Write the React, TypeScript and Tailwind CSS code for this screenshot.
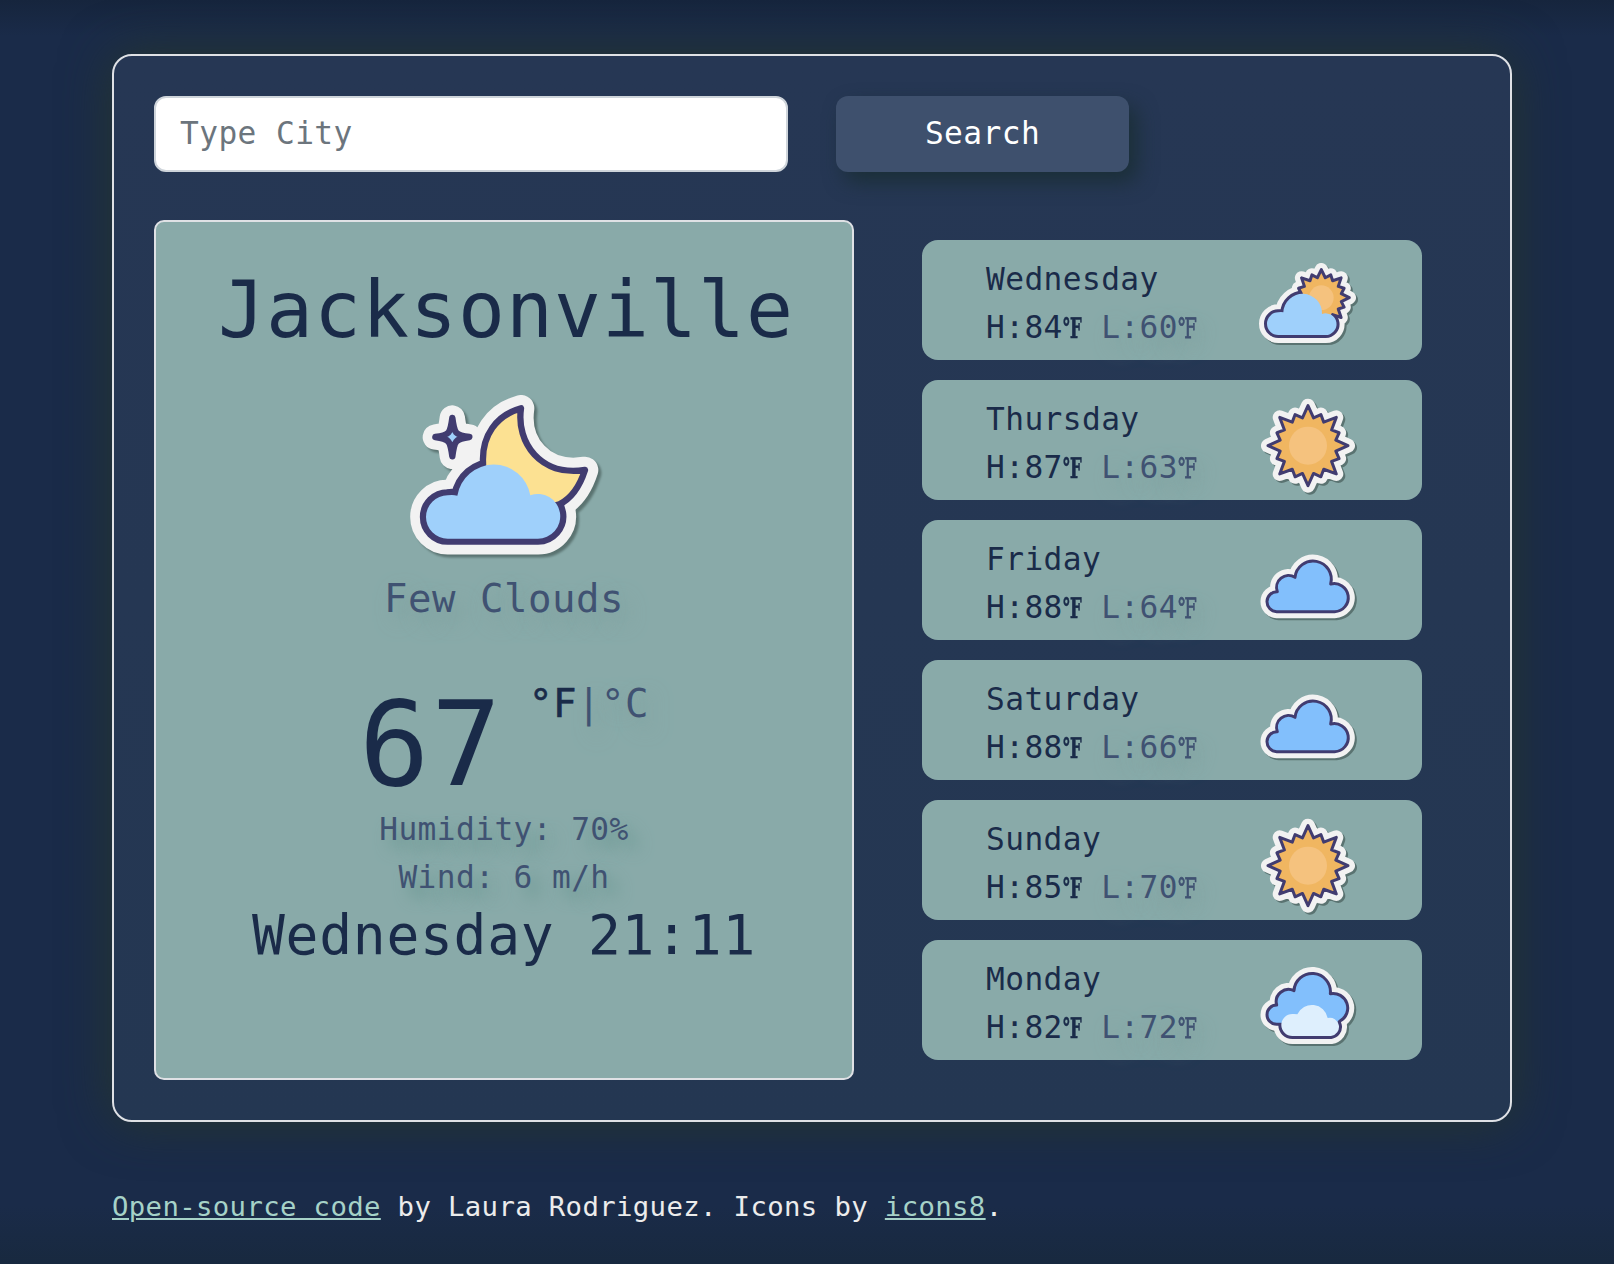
import type { ReactNode } from "react";

const NAVY = "#413c70";
const HALO = "#f2f2f2";

function sunPoints(cx: number, cy: number, long: number, short: number, valley: number) {
  return Array.from({ length: 32 }, (_, k) => {
    const r = k % 4 === 0 ? long : k % 2 === 0 ? short : valley;
    const a = (k * Math.PI) / 16;
    return `${(cx + r * Math.sin(a)).toFixed(1)},${(cy - r * Math.cos(a)).toFixed(1)}`;
  }).join(" ");
}

function Sticker({ viewBox, className, children }: { viewBox: string; className: string; children: ReactNode }) {
  return (
    <svg viewBox={viewBox} className={className} strokeLinejoin="round" strokeLinecap="round">
      {children}
    </svg>
  );
}

const SMALL = "size-[100px] shrink-0 overflow-visible drop-shadow-[2px_2px_0.5px_#5a7371]";

function NightCloudIcon() {
  const moon = "M363 82 C348 185 422 288 555 267 C538 320 515 352 478 370 L300 420 L250 300 L249 243 C246 165 288 103 363 82Z";
  const star = "M157 111 C163 157 165 162 208 168 C165 174 163 180 157 226 C151 180 149 174 106 168 C149 162 151 157 157 111Z";
  const cloud = "M143 473 A65 65 0 0 1 143 343 Q158 340 172 344 A111 111 0 0 1 391 343 A67 67 0 1 1 412 473Z";
  return (
    <Sticker viewBox="12 -12 600 600" className="mt-[19px] size-[200px] overflow-visible drop-shadow-[3px_3px_1px_#5a7371]">
      <path d={moon} fill={HALO} stroke={HALO} strokeWidth="80" />
      <path d={star} fill={HALO} stroke={HALO} strokeWidth="76" />
      <path d="M170 180 L250 140 V260 L183 262Z" fill={HALO} />
      <path d={cloud} fill={HALO} stroke={HALO} strokeWidth="95" />
      <path d={cloud} fill={NAVY} stroke={NAVY} strokeWidth="37" />
      <path d={moon} fill="#fce192" stroke={NAVY} strokeWidth="19" />
      <path d={star} fill="#9fd0fb" stroke={NAVY} strokeWidth="19" />
      <path d={cloud} fill="#9fd0fb" />
    </Sticker>
  );
}

function PartlySunnyIcon() {
  const rays = sunPoints(214, 143, 84, 74, 61);
  const cloud = "M85 255 A34 34 0 0 1 85 187 Q93 185 100 187 A58 58 0 0 1 216 192 A32.5 32.5 0 1 1 226 255Z";
  return (
    <Sticker viewBox="24 15 300 300" className={SMALL}>
      <polygon points={rays} fill={HALO} stroke={HALO} strokeWidth="40" />
      <path d={cloud} fill={HALO} stroke={HALO} strokeWidth="48" />
      <path d={cloud} fill={NAVY} stroke={NAVY} strokeWidth="18" />
      <polygon points={rays} fill="#f0b661" stroke={NAVY} strokeWidth="9" />
      <circle cx="214" cy="143" r="37" fill="#f5c27e" />
      <path d={cloud} fill="#9fd0fb" />
    </Sticker>
  );
}

function SunIcon() {
  const rays = sunPoints(174, 587, 120, 101, 85);
  return (
    <Sticker viewBox="24 435 300 300" className={SMALL}>
      <polygon points={rays} fill={HALO} stroke={HALO} strokeWidth="42" />
      <polygon points={rays} fill="#f0b661" stroke={NAVY} strokeWidth="9" />
      <circle cx="174" cy="587" r="57" fill="#f5c27e" />
    </Sticker>
  );
}

function CloudIcon() {
  const cloud = "M80 245 A30 30 0 0 1 82 185 A36 36 0 0 1 135 142 A54.6 54.6 0 1 1 242 162 A42.2 42.2 0 1 1 254 245Z";
  return (
    <Sticker viewBox="24 15 300 300" className={SMALL}>
      <path d={cloud} fill={HALO} stroke={HALO} strokeWidth="39" />
      <path d={cloud} fill="#82bffc" stroke={NAVY} strokeWidth="9" />
    </Sticker>
  );
}

function CloudsIcon() {
  const back = "M95 223 H80 A29 29 0 0 1 80 165 A37 37 0 0 1 132 122 A54.7 54.7 0 1 1 241 131 A44 44 0 0 1 270 213 L250 240 H105Z";
  const front = "M127 258 A33 33 0 0 1 127 192 Q134 191 142 193 A48 48 0 0 1 233 204 A27.5 27.5 0 1 1 243 258Z";
  return (
    <Sticker viewBox="24 15 300 300" className={SMALL}>
      <path d={back} fill={HALO} stroke={HALO} strokeWidth="39" />
      <path d={front} fill={HALO} stroke={HALO} strokeWidth="48" />
      <path d={front} fill={NAVY} stroke={NAVY} strokeWidth="18" />
      <path d={back} fill="#82bffc" stroke={NAVY} strokeWidth="9" />
      <path d={front} fill="#deeffd" />
    </Sticker>
  );
}

const days = [
  { name: "Wednesday", high: 84, low: 60, Icon: PartlySunnyIcon },
  { name: "Thursday", high: 87, low: 63, Icon: SunIcon },
  { name: "Friday", high: 88, low: 64, Icon: CloudIcon },
  { name: "Saturday", high: 88, low: 66, Icon: CloudIcon },
  { name: "Sunday", high: 85, low: 70, Icon: SunIcon },
  { name: "Monday", high: 82, low: 72, Icon: CloudsIcon },
];

function Fahrenheit({ bold = false }: { bold?: boolean }) {
  return (
    <span className="inline-block w-[19.2px] whitespace-nowrap">
      <span
        className={
          bold
            ? "inline-block origin-left scale-x-[0.6] font-['DejaVu_Serif'] text-[28px] leading-none font-bold [-webkit-text-stroke:0.6px_#1a2b49]"
            : "inline-block origin-left scale-x-[0.64] font-['DejaVu_Serif'] text-[28px] leading-none [-webkit-text-stroke:0.8px_#405272]"
        }
      >
        ℉
      </span>
    </span>
  );
}

export default function App() {
  return (
    <div className="h-[1264px] w-[1614px] overflow-hidden bg-[linear-gradient(#16253d_0px,#1a2b49_36px,#1a2b49_1205px,#18293f_1264px)] px-28 pt-[54px] font-['DejaVu_Sans_Mono',monospace] text-[#1a2b49] **:tracking-[0.0134em]">
      <main className="h-[1068px] w-[1400px] rounded-[20px] border-2 border-[#dfe1e5] bg-linear-to-b from-[#263754] to-[#243752] px-10 pt-10 shadow-[0_0_50px_#26362e]">
        <form className="flex gap-12" onSubmit={(e) => e.preventDefault()}>
          <input
            type="text"
            placeholder="Type City"
            className="h-[76px] w-[634px] rounded-xl border-2 border-[#ced4da] bg-white px-6 pb-0.5 text-[31.2px] placeholder:text-[#6c757d] placeholder:opacity-100"
          />
          <button
            type="submit"
            className="h-[76px] w-[293px] rounded-xl bg-[#3e506d] pb-0.5 text-[31.2px] text-white shadow-[8px_10px_20px_#1b2f38]"
          >
            Search
          </button>
        </form>

        <div className="mt-12 flex">
          <section className="flex h-[860px] w-[700px] flex-col items-center rounded-[10px] border-2 border-[#dfe1e5] bg-[#89aaa9] pt-10">
            <h1 className="pl-1 text-[78px] leading-[96px]">Jacksonville</h1>
            <NightCloudIcon />
            <p className="text-[39px] leading-[43px] text-[#405272] text-shadow-[8px_10px_20px_#7c9f9d]">Few Clouds</p>
            <div className="mt-[65px] flex h-[120px] gap-6">
              <span className="w-36 text-[117px] leading-[120px]">67</span>
              <span className="pl-0.5 text-[39px] leading-[38px] text-[#405272] text-shadow-[8px_10px_20px_#7c9f9d]">
                <span className="text-[#1a2b49] text-shadow-none [-webkit-text-stroke:0.6px_#1a2b49]">°F</span>|°C
              </span>
            </div>
            <p className="text-[31.2px] leading-[48px] text-[#405272] text-shadow-[10px_10px_16px_#66958f]">Humidity: 70%</p>
            <p className="text-[31.2px] leading-[48px] text-[#405272] text-shadow-[10px_10px_16px_#66958f]">Wind: 6 m/h</p>
            <h2 className="text-[54.6px] leading-[68px]">Wednesday 21:11</h2>
          </section>

          <ul className="mt-5 ml-[68px] flex w-[500px] flex-col gap-5">
            {days.map(({ name, high, low, Icon }) => (
              <li key={name} className="flex h-[120px] justify-between rounded-2xl bg-[#89aaa9] px-16 pt-[15px] text-[31.2px] leading-[48px]">
                <div>
                  <p>{name}</p>
                  <p className="flex h-12 items-baseline whitespace-pre">
                    <span>H:{high}</span>
                    <Fahrenheit bold />
                    <span> </span>
                    <span className="text-[#405272] text-shadow-[10px_10px_20px_#7c9f9d]">
                      L:{low}
                      <Fahrenheit />
                    </span>
                  </p>
                </div>
                <Icon />
              </li>
            ))}
          </ul>
        </div>
      </main>

      <footer className="mt-16 text-[27.3px] leading-[42px] text-[#ececec]">
        <a href="#" className="text-[#a6d2c8] underline decoration-2 underline-offset-2">Open-source code</a> by Laura Rodriguez. Icons by{" "}
        <a href="#" className="text-[#a6d2c8] underline decoration-2 underline-offset-2">icons8</a>.
      </footer>
    </div>
  );
}
